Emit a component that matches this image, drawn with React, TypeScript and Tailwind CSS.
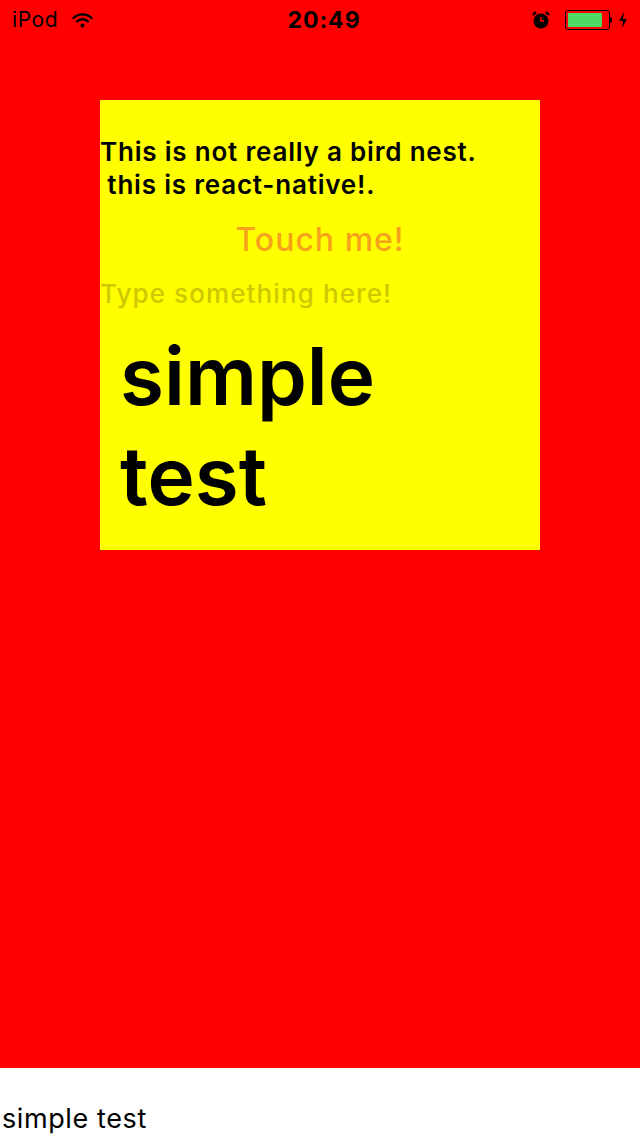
import React from "react";

function StatusBar() {
  return (
    <div className="relative flex h-10 items-center justify-between px-3 text-[21px] text-black">
      <div className="flex items-center gap-[14px]">
        <span className="tracking-[0.6px]">iPod</span>
        <svg width="21" height="16" viewBox="0 0 20 16">
          <path d="M1 6 A13 13 0 0 1 19 6" stroke="black" strokeWidth="2.4" fill="none" strokeLinecap="round" />
          <path d="M4.5 9.5 A8 8 0 0 1 15.5 9.5" stroke="black" strokeWidth="2.4" fill="none" strokeLinecap="round" />
          <circle cx="10" cy="13.5" r="2" fill="black" />
        </svg>
      </div>
      <span className="absolute left-1/2 -translate-x-1/2 pl-2 text-[23px] font-bold tracking-[1px]">
        20:49
      </span>
      <div className="flex items-center gap-1.5">
        <svg width="20" height="20" viewBox="0 0 20 20">
          <circle cx="10" cy="11" r="7.5" fill="black" />
          <path d="M2 5 L5 2 M18 5 L15 2" stroke="black" strokeWidth="2.4" />
          <path d="M10 7 V11 H13" stroke="red" strokeWidth="1.6" fill="none" />
        </svg>
        <div className="ml-2 flex items-center">
          <div className="h-[20px] w-[45px] rounded-[3px] border border-black p-[2px]">
            <div className="h-full w-[34px] rounded-[1px] bg-[#4cd964]" />
          </div>
          <div className="h-[6px] w-[2px] rounded-r bg-black" />
        </div>
        <svg width="10" height="18" viewBox="0 0 10 18">
          <path d="M6 1 L1 10 H5 L4 17 L9 8 H5 Z" fill="black" />
        </svg>
      </div>
    </div>
  );
}

export default function App() {
  return (
    <div
      className="flex h-[1136px] w-[640px] flex-col"
      style={{ fontFamily: "Inter, 'Liberation Sans', sans-serif" }}
    >
      <div className="flex flex-1 flex-col bg-[#ff0000]">
        <StatusBar />
        <div className="ml-[100px] mt-[60px] flex h-[450px] w-[440px] flex-col bg-[#ffff00]">
          <p className="mt-[35px] text-[26px] font-semibold leading-[33px] tracking-[0.8px] text-black">
            This is not really a bird nest.
            <br />
            &nbsp;this is react-native!.
          </p>
          <p className="mt-[19px] text-center text-[32px] font-medium leading-[40px] tracking-[1px] text-[#f7a21b]">
            Touch me!
          </p>
          <p className="mt-[18px] text-[26px] font-medium leading-[32px] tracking-[1.1px] text-[#cfc800]">
            Type something here!
          </p>
          <p className="ml-[20px] mt-[16px] text-[80px] font-semibold leading-[100px] text-black">
            simple
            <br />
            test
          </p>
        </div>
      </div>
      <div className="flex h-[68px] items-end bg-white pl-[2px]">
        <span className="text-[27px] leading-[34px] tracking-[0.6px] text-black">simple test</span>
      </div>
    </div>
  );
}
